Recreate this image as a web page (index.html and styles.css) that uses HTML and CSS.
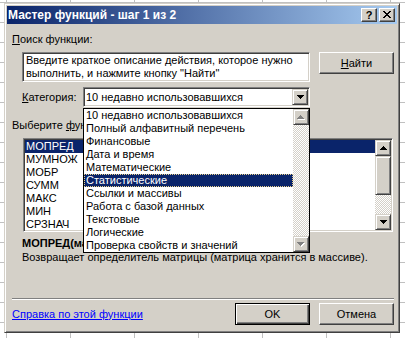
FILE: index.html
```html
<!DOCTYPE html>
<html>
<head>
<meta charset="utf-8">
<link rel="stylesheet" href="styles.css">
</head>
<body>
<div class="desk">
  <div class="dialog">
    <div class="titlebar">
      <span class="title">Мастер функций - шаг 1 из 2</span>
      <div class="tbtns">
        <span class="tbtn help">?</span>
        <span class="tbtn close"><svg width="8" height="7" viewBox="0 0 8 7"><path d="M0 0h2v1h1v1h2v-1h1v-1h2v1h-1v1h-1v1h-1v1h1v1h1v1h1v1h-2v-1h-1v-1h-2v1h-1v1h-2v-1h1v-1h1v-1h1v-1h-1v-1h-1v-1h-1z" fill="#000"/></svg></span>
      </div>
    </div>
    <div class="body">
      <div class="lbl-search"><u>П</u>оиск функции:</div>
      <div class="search-row">
        <div class="field search-field">Введите краткое описание действия, которое нужно выполнить, и нажмите кнопку "Найти"</div>
        <div class="btn find-btn"><u>Н</u>айти</div>
      </div>
      <div class="cat-row">
        <span class="cat-label"><u>К</u>атегория:</span>
        <div class="field combo">
          <span class="combo-text">10 недавно использовавшихся</span>
          <span class="sbtn"><svg width="7" height="4" viewBox="0 0 7 4"><path d="M0 0h7v1h-1v1h-1v1h-1v1h-1v-1h-1v-1h-1v-1h-1z" fill="#000"/></svg></span>
        </div>
      </div>
      <div class="lbl-func">Выберите <u>ф</u>ункцию:</div>
      <div class="field listbox">
        <ul class="items">
          <li class="sel">МОПРЕД</li>
          <li>МУМНОЖ</li>
          <li>МОБР</li>
          <li>СУММ</li>
          <li>МАКС</li>
          <li>МИН</li>
          <li>СРЗНАЧ</li>
        </ul>
        <div class="vscroll">
          <span class="sbtn"><svg width="7" height="4" viewBox="0 0 7 4"><path d="M3 0h1v1h1v1h1v1h1v1h-7v-1h1v-1h1v-1h1z" fill="#000"/></svg></span>
          <span class="thumb"></span>
          <span class="track"></span>
          <span class="sbtn"><svg width="7" height="4" viewBox="0 0 7 4"><path d="M0 0h7v1h-1v1h-1v1h-1v1h-1v-1h-1v-1h-1v-1h-1z" fill="#000"/></svg></span>
        </div>
      </div>
      <div class="fn-sig">МОПРЕД(массив)</div>
      <div class="fn-desc">Возвращает определитель матрицы (матрица хранится в массиве).</div>
      <div class="sep"></div>
      <div class="bottom-row">
        <a class="help-link">Справка по этой функции</a>
        <div class="btn ok">OK</div>
        <div class="btn cancel">Отмена</div>
      </div>
    </div>
    <div class="dropdown">
      <ul class="items">
        <li>10 недавно использовавшихся</li>
        <li>Полный алфавитный перечень</li>
        <li>Финансовые</li>
        <li>Дата и время</li>
        <li>Математические</li>
        <li class="sel focus">Статистические</li>
        <li>Ссылки и массивы</li>
        <li>Работа с базой данных</li>
        <li>Текстовые</li>
        <li>Логические</li>
        <li>Проверка свойств и значений</li>
      </ul>
      <div class="vscroll">
        <span class="sbtn"><svg width="8" height="5" viewBox="0 0 8 5"><path d="M4 1h1v1h1v1h1v1h1v1h-7v-1h1v-1h1v-1h1z" fill="#fff"/><path d="M3 0h1v1h1v1h1v1h1v1h-7v-1h1v-1h1v-1h1z" fill="#808080"/></svg></span>
        <span class="track"></span>
        <span class="sbtn"><svg width="8" height="5" viewBox="0 0 8 5"><path d="M1 1h7v1h-1v1h-1v1h-1v1h-1v-1h-1v-1h-1v-1h-1z" fill="#fff"/><path d="M0 0h7v1h-1v1h-1v1h-1v1h-1v-1h-1v-1h-1v-1h-1z" fill="#808080"/></svg></span>
      </div>
    </div>
  </div>
</div>
</body>
</html>
```

FILE: styles.css
```css
* { box-sizing: border-box; }
html, body { margin: 0; padding: 0; }
body {
  width: 405px;
  height: 338px;
  overflow: hidden;
  background-color: #fff;
  background-image:
    linear-gradient(to right, #c0c0c0 1px, transparent 1px),
    linear-gradient(to bottom, #c0c0c0 1px, transparent 1px);
  background-size: 64px 100%, 100% 20px;
  background-position: 6px 0, 0 2px;
  font-family: "Liberation Sans", Arial, sans-serif;
  font-size: 11px;
  line-height: 13px;
  color: #000;
}
u { text-decoration: underline; text-underline-offset: 1px; }
.desk { padding: 3px 0 0 4px; }
.dialog {
  position: relative;
  width: 396px;
  height: 330px;
  background: #d4d0c8;
  border: 1px solid;
  border-color: #d4d0c8 #404040 #404040 #d4d0c8;
  box-shadow: inset 1px 1px #fff, inset -1px -1px #808080;
  padding: 2px;
  display: flex;
  flex-direction: column;
}
.titlebar {
  height: 18px;
  flex: none;
  display: flex;
  align-items: center;
  padding: 0 2px 0 1px;
  background: linear-gradient(to right, #0a246a, #a6caf0);
}
.title {
  color: #fff;
  font-weight: bold;
  font-size: 12px;
  white-space: nowrap;
}
.tbtns { margin-left: auto; display: flex; gap: 2px; }
.tbtn {
  width: 16px;
  height: 14px;
  background: #d4d0c8;
  border: 1px solid;
  border-color: #fff #404040 #404040 #fff;
  box-shadow: inset -1px -1px #808080;
  display: flex;
  align-items: center;
  justify-content: center;
}
.help {
  font-weight: bold;
  font-size: 11px;
  line-height: 12px;
  padding-bottom: 1px;
}
.close svg { margin-bottom: 1px; }
.body {
  flex: 1;
  display: flex;
  flex-direction: column;
  padding: 0 3px 0 5px;
}
.lbl-search { margin-top: 9px; }
.field {
  background: #fff;
  border: 1px solid;
  border-color: #808080 #fff #fff #808080;
  box-shadow: inset 1px 1px #404040, inset -1px -1px #d4d0c8;
}
.search-row { display: flex; align-items: flex-start; margin-top: 6px; }
.search-field {
  margin-left: 10px;
  width: 288px;
  height: 30px;
  padding: 1px 3px 0 3px;
}
.btn {
  width: 75px;
  height: 22px;
  background: #d4d0c8;
  border: 1px solid;
  border-color: #fff #404040 #404040 #fff;
  box-shadow: inset -1px -1px #808080;
  display: flex;
  align-items: center;
  justify-content: center;
}
.find-btn { margin-left: auto; }
.ok {
  border-color: #000;
  box-shadow: inset 1px 1px #fff, inset -1px -1px #404040, inset -2px -2px #808080;
}
.cancel { margin-left: 9px; }
.cat-row { display: flex; align-items: center; margin-top: 5px; }
.cat-label { margin-left: 10px; width: 61px; }
.combo {
  width: 227px;
  height: 20px;
  display: flex;
  align-items: center;
  padding: 1px 1px 1px 2px;
}
.combo-text { flex: 1; white-space: nowrap; overflow: hidden; }
.sbtn {
  flex: none;
  width: 16px;
  height: 16px;
  background: #d4d0c8;
  border: 1px solid;
  border-color: #d4d0c8 #404040 #404040 #d4d0c8;
  box-shadow: inset 1px 1px #fff, inset -1px -1px #808080;
  display: flex;
  align-items: center;
  justify-content: center;
}
.sbtn svg { display: block; }
.lbl-func { margin-top: 12px; }
.listbox {
  margin-top: 6px;
  margin-left: 11px;
  width: 370px;
  height: 94px;
  padding: 1px;
  display: flex;
}
.items {
  list-style: none;
  margin: 0;
  padding: 0;
  flex: 1;
  overflow: hidden;
}
.items li { height: 13px; padding-left: 1px; white-space: nowrap; }
.items li.sel { background: #0a246a; color: #fff; }
.vscroll { flex: none; width: 16px; display: flex; flex-direction: column; }
.thumb {
  flex: none;
  height: 39px;
  background: #d4d0c8;
  border: 1px solid;
  border-color: #d4d0c8 #404040 #404040 #d4d0c8;
  box-shadow: inset 1px 1px #fff, inset -1px -1px #808080;
}
.track {
  flex: 1;
  background: repeating-conic-gradient(#d4d0c8 0 25%, #fff 0 50%) 0 0 / 2px 2px;
}
.fn-sig { margin-top: 5px; margin-left: 10px; font-weight: bold; white-space: nowrap; }
.fn-desc { margin-top: 1px; margin-left: 10px; white-space: nowrap; }
.sep {
  margin-top: 34px;
  height: 2px;
  border-top: 1px solid #808080;
  border-bottom: 1px solid #fff;
}
.bottom-row { display: flex; align-items: center; margin-top: 3px; }
.help-link { color: #0000ff; text-decoration: underline; margin-right: auto; }
.dropdown {
  position: absolute;
  left: 78px;
  top: 104px;
  width: 227px;
  height: 145px;
  background: #fff;
  border: 1px solid #000;
  display: flex;
}
.dropdown .items li { padding-left: 2px; }
.dropdown .items li.focus { outline: 1px dotted #e8d08a; outline-offset: -1px; }
```
